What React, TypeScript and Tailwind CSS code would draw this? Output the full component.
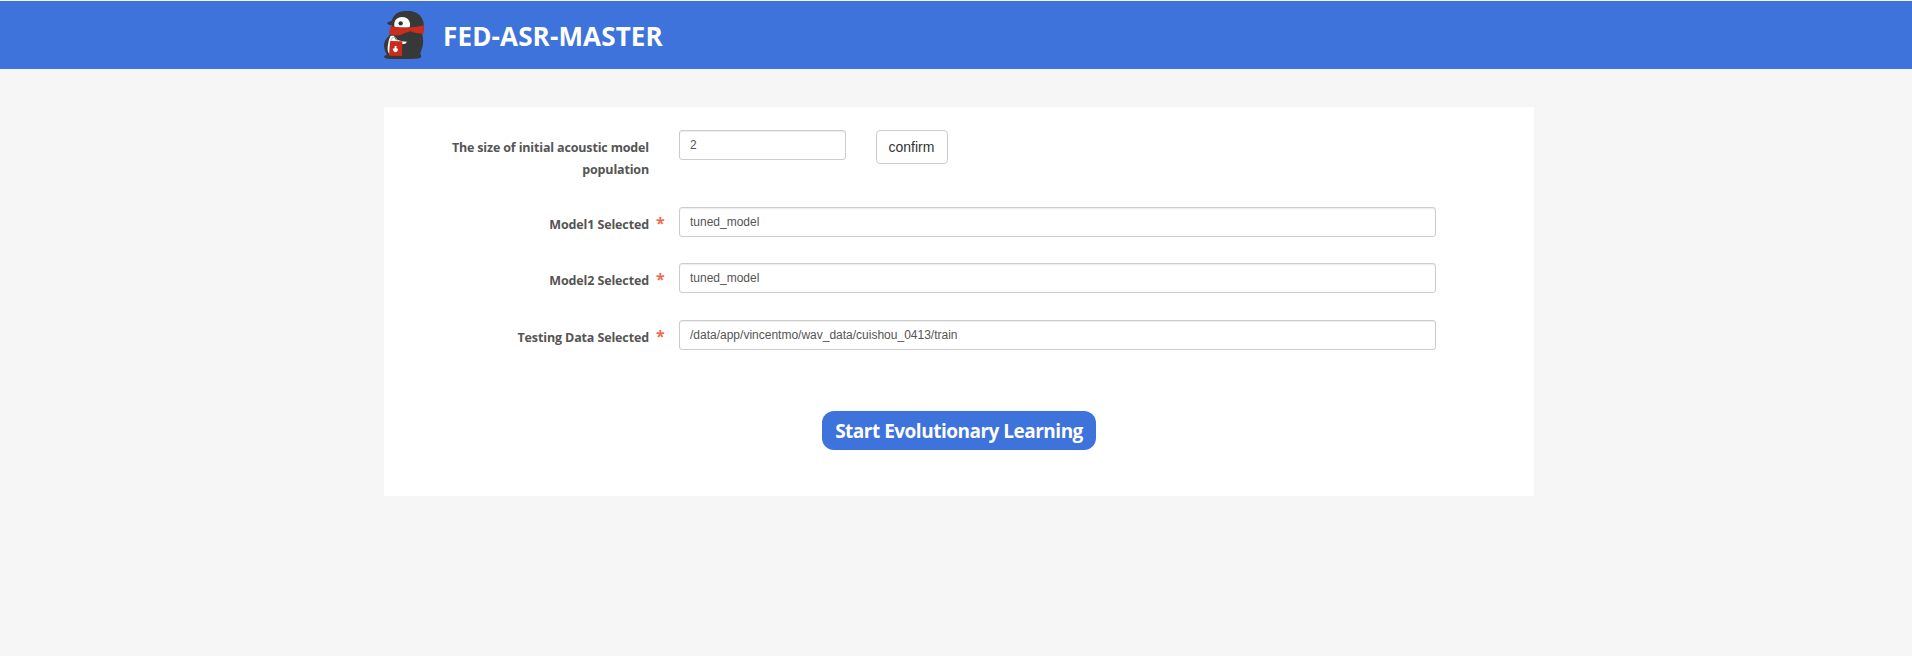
import React from "react";

const labelFont = "font-['Open_Sans','Noto_Sans',sans-serif]";
const inputFont = "font-['Liberation_Sans',sans-serif]";

function PenguinLogo() {
  return (
    <svg className="mt-[10px] h-12 w-10" viewBox="42 33 120 144" aria-hidden="true">
      <path
        d="M51 69Q55 64 65 62Q70 45 86 37Q101 31 122 33Q145 37 155 53Q162 65 162 80Q162 94 157 104Q163 129 155 148L151 161Q156 169 151 174Q138 177 110 177H60Q43 176 42 170Q43 166 51 165Q41 150 42 133Q45 118 59 106L66 76Q54 77 51 69Z"
        fill="#363938"
      />
      <path d="M73 76Q71 65 80 56Q90 49 103 52Q117 56 120 69Q121 75 119 82Q94 84 73 80Z" fill="#fff" />
      <circle cx="92" cy="70" r="6.5" fill="#303332" />
      <path d="M63 78Q83 84 112 83Q142 81 161 76Q163 88 160 102Q140 102 121 94Q104 98 90 106Q72 107 57 103Q58 89 63 78Z" fill="#cb2c1d" />
      <path d="M62 107H72L76 118L96 124L111 125L106 131L96 132V155L58 163Q50 151 54 134Q55 119 62 107Z" fill="#fff" />
      <path d="M60 123L97 124L96 168L57 167Z" fill="#c92c1d" />
      <path d="M61 125L67 112L77 113L84 125" fill="none" stroke="#b7b4b2" strokeWidth="2.5" />
      <path d="M74 138H80L79 144Q84 145 84 150Q82 157 75 157Q69 154 68 146L74 145Z" fill="#fff" />
    </svg>
  );
}

function Field({ label, value }: { label: string; value: string }) {
  return (
    <div className="flex h-[30px]">
      <label className={`w-[265px] whitespace-nowrap pt-[7px] text-right text-[12.5px] font-bold leading-[22px] tracking-[-0.13px] text-[#555] ${labelFont}`}>
        {label}
      </label>
      <span className={`w-[30px] pl-[7px] pt-[5px] text-[16px] font-bold leading-[22px] text-[#ed6b52] ${labelFont}`}>*</span>
      <input
        className={`h-[30px] w-[757px] rounded-[3px] border border-[#ccc] bg-white px-[10px] pb-px text-[12px] text-[#555] shadow-[inset_0_1px_1px_rgba(0,0,0,0.075)] outline-none ${inputFont}`}
        defaultValue={value}
      />
    </div>
  );
}

export default function App() {
  return (
    <div className="min-h-screen bg-[#f6f6f6]">
      <header className="h-[69px] border-t border-[#f6f6f6] bg-[#3d73db]">
        <div className="mx-auto flex w-[1150px] translate-x-[3px]">
          <PenguinLogo />
          <h1 className={`ml-[19px] whitespace-nowrap pt-[17px] text-[26px] font-bold leading-[36px] tracking-[0.15px] text-white ${labelFont}`}>
            FED-ASR-MASTER
          </h1>
        </div>
      </header>
      <main className="mx-auto mt-[38px] h-[389px] w-[1150px] translate-x-[3px] bg-white pt-[23px]">
        <div className="flex h-[77px] items-start">
          <label className={`w-[265px] whitespace-nowrap pt-[7px] text-right text-[12.5px] font-bold leading-[22px] tracking-[-0.16px] text-[#555] ${labelFont}`}>
            The size of initial acoustic model
            <br />
            population
          </label>
          <input
            className={`ml-[30px] h-[30px] w-[167px] rounded-[3px] border border-[#ccc] bg-white px-[10px] pb-px text-[12px] text-[#555] shadow-[inset_0_1px_1px_rgba(0,0,0,0.075)] outline-none ${inputFont}`}
            defaultValue="2"
          />
          <button className={`ml-[30px] h-[34px] w-[72px] rounded-[4px] border border-[#ccc] bg-white pr-px text-[14px] text-[#333] ${inputFont}`}>
            confirm
          </button>
        </div>
        <Field label="Model1 Selected" value="tuned_model" />
        <div className="h-[26px]" />
        <Field label="Model2 Selected" value="tuned_model" />
        <div className="h-[27px]" />
        <Field label="Testing Data Selected" value="/data/app/vincentmo/wav_data/cuishou_0413/train" />
        <div className="mt-[61px] flex justify-center">
          <button className={`h-[39px] w-[274px] whitespace-nowrap rounded-[12px] bg-[#3d73db] pt-px text-[19px] font-bold tracking-[-0.5px] text-white ${labelFont}`}>
            Start Evolutionary Learning
          </button>
        </div>
      </main>
    </div>
  );
}
